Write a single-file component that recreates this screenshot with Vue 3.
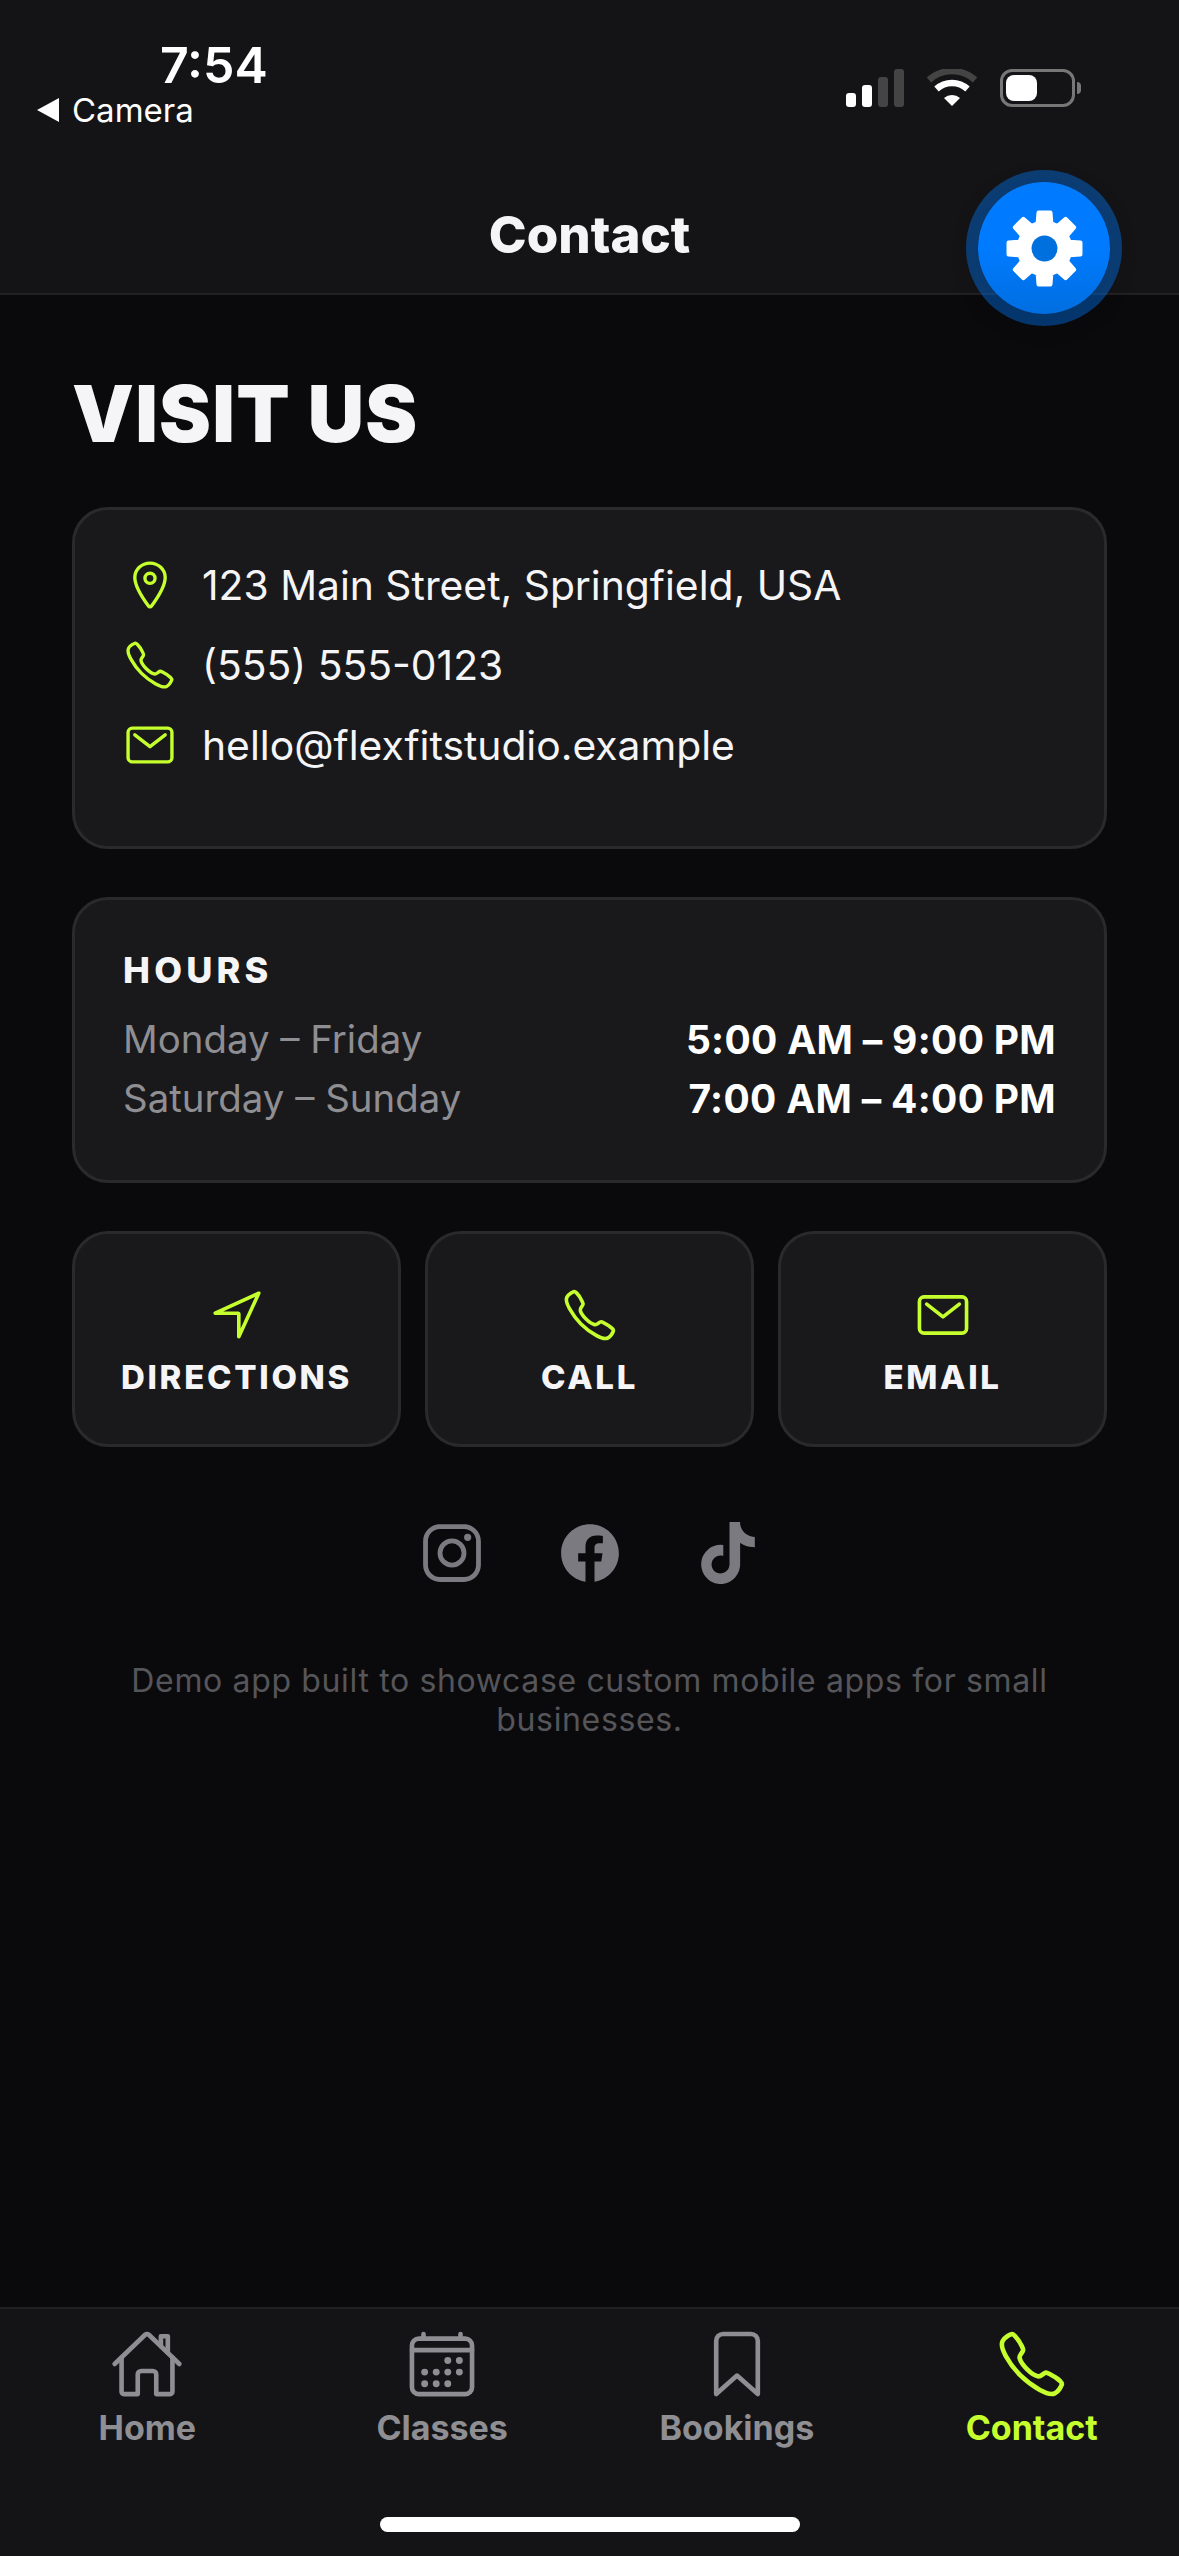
<script setup>
// gear outline, 8 teeth around the centre
function gearPath() {
  const pts = []
  const teeth = 8
  for (let i = 0; i < teeth; i++) {
    const a = (i / teeth) * Math.PI * 2 - Math.PI / 2
    const step = Math.PI / teeth
    const add = (r, d) => pts.push([50 + r * Math.cos(a + d), 50 + r * Math.sin(a + d)])
    add(45, -step * 0.42)
    add(45, step * 0.42)
    add(32, step * 0.68)
    add(32, step * 1.32)
  }
  return 'M' + pts.map((p) => p[0].toFixed(2) + ' ' + p[1].toFixed(2)).join('L') + 'Z'
}
const gear = gearPath()

const phone = 'M451 374c-15.88-16-54.34-39.35-73-48.76-24.3-12.24-26.3-13.24-45.4.95-12.74 9.47-21.21 17.93-36.12 14.75s-47.31-21.11-75.68-49.39-47.34-61.62-50.53-76.48 5.41-23.23 14.79-36c13.22-18 12.22-21 .92-45.3-8.81-18.9-32.84-57-48.9-72.8C119.9 44 119.9 47 108.83 51.6A160.15 160.15 0 0083 65.37C67 76 58.12 84.83 51.91 98.1s-9 44.38 23.07 102.64 54.57 88.05 101.14 134.49S258.5 406.64 310.85 436c64.76 36.27 89.6 29.2 102.91 23s22.18-15 32.83-31a159.09 159.09 0 0013.8-25.8C465 391.17 468 391.17 451 374z'

const hours = [
  { days: 'Monday – Friday', time: '5:00 AM – 9:00 PM' },
  { days: 'Saturday – Sunday', time: '7:00 AM – 4:00 PM' }
]
const calDots = [[296, 232], [376, 232], [136, 312], [216, 312], [296, 312], [376, 312], [136, 392], [216, 392], [296, 392]]
</script>

<template>
  <div class="page">
    <header class="top">
      <div class="status">
        <div class="status-left">
          <div class="time">7:54</div>
          <div class="back"><span class="back-arrow"></span>Camera</div>
        </div>
        <div class="status-right">
          <svg width="60" height="38" viewBox="0 0 60 38">
            <rect x="0" y="24" width="10" height="14" rx="3" fill="#fff" />
            <rect x="16" y="16" width="10" height="22" rx="3" fill="#fff" />
            <rect x="32" y="8" width="10" height="30" rx="3" fill="#444" />
            <rect x="48" y="0" width="10" height="38" rx="3" fill="#444" />
          </svg>
          <svg class="wifi" width="52" height="38" viewBox="0 0 52 38">
            <path d="M3 11 A34 34 0 0 1 49 11" fill="none" stroke="#444" stroke-width="6.5" />
            <path d="M10.500 20 A23 23 0 0 1 41.500 20" fill="none" stroke="#fff" stroke-width="6.5" />
            <path d="M18 29 L26 37 L34 29 A12 12 0 0 0 18 29Z" fill="#fff" />
          </svg>
          <div class="battery"><span class="battery-fill"></span></div>
          <span class="battery-cap"></span>
        </div>
      </div>
      <h1 class="title">Contact</h1>
    </header>

    <button class="gear-btn">
      <svg width="81" height="81" viewBox="0 0 100 100">
        <path :d="gear" fill="#fff" stroke="#fff" stroke-width="5" stroke-linejoin="round" />
        <circle cx="50" cy="50" r="16" fill="#0070de" />
      </svg>
    </button>

    <main class="content">
      <h2 class="heading">VISIT US</h2>

      <section class="card info">
        <div class="info-row">
          <svg class="ico" viewBox="0 0 512 512">
            <path d="M256 48c-79.500 0-144 61.390-144 137 0 87 96 224.870 131.250 272.490a15.770 15.770 0 0025.500 0C304 409.890 400 272.070 400 185c0-75.610-64.500-137-144-137z" />
            <circle cx="256" cy="192" r="48" />
          </svg>
          <span>123 Main Street, Springfield, USA</span>
        </div>
        <div class="info-row">
          <svg class="ico" viewBox="0 0 512 512"><path :d="phone" /></svg>
          <span>(555) 555-0123</span>
        </div>
        <div class="info-row">
          <svg class="ico" viewBox="0 0 512 512">
            <rect x="48" y="96" width="416" height="320" rx="40" ry="40" />
            <path d="M112 160l144 112 144-112" />
          </svg>
          <span>hello@flexfitstudio.example</span>
        </div>
      </section>

      <section class="card hours">
        <h3 class="hours-title">HOURS</h3>
        <div v-for="h in hours" :key="h.days" class="hours-row">
          <span class="days">{{ h.days }}</span>
          <span class="range">{{ h.time }}</span>
        </div>
      </section>

      <div class="actions">
        <div class="action">
          <svg class="ico" viewBox="0 0 512 512"><path d="M448 64L64 240.140h200a8 8 0 018 8V448z" /></svg>
          <span>DIRECTIONS</span>
        </div>
        <div class="action">
          <svg class="ico" viewBox="0 0 512 512"><path :d="phone" /></svg>
          <span>CALL</span>
        </div>
        <div class="action">
          <svg class="ico" viewBox="0 0 512 512">
            <rect x="48" y="96" width="416" height="320" rx="40" ry="40" />
            <path d="M112 160l144 112 144-112" />
          </svg>
          <span>EMAIL</span>
        </div>
      </div>

      <div class="socials">
        <svg class="social" viewBox="0 0 512 512">
          <path d="M349.330 69.330a93.620 93.620 0 0193.340 93.340v186.660a93.620 93.620 0 01-93.340 93.340H162.670a93.620 93.620 0 01-93.340-93.340V162.670a93.620 93.620 0 0193.340-93.340h186.660m0-37.330H162.670C90.800 32 32 90.800 32 162.670v186.660C32 421.200 90.800 480 162.670 480h186.660C421.200 480 480 421.200 480 349.330V162.670C480 90.800 421.200 32 349.330 32z" />
          <path d="M377.330 162.670a28 28 0 1128-28 27.940 27.940 0 01-28 28zM256 181.330A74.670 74.670 0 11181.330 256 74.750 74.750 0 01256 181.330m0-37.330a112 112 0 10112 112 112 112 0 00-112-112z" />
        </svg>
        <svg class="social" viewBox="0 0 512 512">
          <path fill-rule="evenodd" d="M480 257.350c0-123.700-100.300-224-224-224s-224 100.300-224 224c0 111.800 81.900 204.470 189 221.290V322.120h-56.890v-64.770H221V208c0-56.130 33.450-87.160 84.610-87.160 24.510 0 50.150 4.380 50.150 4.380v55.130H327.500c-27.810 0-36.510 17.260-36.510 35v42h62.120l-9.920 64.770H291v156.540c107.100-16.810 189-109.480 189-221.310z" />
        </svg>
        <svg class="social" viewBox="0 0 512 512">
          <path d="M412.190 118.660a109.270 109.270 0 01-9.450-5.500 132.870 132.870 0 01-24.270-20.620c-18.100-20.710-24.860-41.720-27.350-56.430h.1C349.140 23.900 350 16 350.130 16h-82.440v318.780c0 4.280 0 8.510-.18 12.690 0 .52-.05 1-.08 1.560 0 .23 0 .47-.05.71v.18a70 70 0 01-35.220 55.560 68.800 68.800 0 01-34.110 9c-38.410 0-69.540-31.320-69.540-70s31.130-70 69.540-70a68.900 68.900 0 0121.410 3.390l.1-83.940a153.140 153.140 0 00-118 34.520 161.790 161.790 0 00-35.300 43.530c-3.480 6-16.610 30.110-18.200 69.240-1 22.210 5.670 45.220 8.850 54.730v.2c2 5.600 9.750 24.710 22.380 40.820A167.530 167.530 0 00115 470.660v-.2l.2.200c39.910 27.120 84.160 25.340 84.160 25.340 7.660-.31 33.320 0 62.460-13.810 32.320-15.310 50.720-38.120 50.720-38.120a158.460 158.460 0 0027.640-45.930c7.460-19.610 9.950-43.130 9.950-52.530V176.490c1 .6 14.320 9.410 14.320 9.410s19.190 12.300 49.130 20.310c21.480 5.700 50.420 6.900 50.420 6.900v-81.840c-10.140 1.100-30.730-2.100-51.810-12.610z" />
        </svg>
      </div>

      <p class="note">Demo app built to showcase custom mobile apps for small businesses.</p>
    </main>

    <nav class="tabs">
      <div class="tab">
        <svg class="tab-ico" viewBox="0 0 512 512">
          <path d="M80 212v236a16 16 0 0016 16h96V328a24 24 0 0124-24h80a24 24 0 0124 24v136h96a16 16 0 0016-16V212" />
          <path d="M480 256L266.890 52c-5-5.280-16.690-5.340-22 0L32 256" />
          <path d="M400 179V64h-48v69" />
        </svg>
        <span>Home</span>
      </div>
      <div class="tab">
        <svg class="tab-ico" viewBox="0 0 512 512">
          <rect x="48" y="80" width="416" height="384" rx="48" />
          <circle v-for="d in calDots" :key="d.join()" :cx="d[0]" :cy="d[1]" r="24" class="dot" />
          <path d="M128 48v32M384 48v32M464 160H48" />
        </svg>
        <span>Classes</span>
      </div>
      <div class="tab">
        <svg class="tab-ico" viewBox="0 0 512 512">
          <path d="M352 48H160a48 48 0 00-48 48v368l144-128 144 128V96a48 48 0 00-48-48z" />
        </svg>
        <span>Bookings</span>
      </div>
      <div class="tab active">
        <svg class="tab-ico" viewBox="0 0 512 512"><path :d="phone" /></svg>
        <span>Contact</span>
      </div>
    </nav>
    <div class="home-bar"><span class="indicator"></span></div>
  </div>
</template>

<style>
html,
body {
  margin: 0;
  background: #0a0a0c;
}
</style>

<style scoped>
.page {
  position: relative;
  width: 1179px;
  height: 2556px;
  display: flex;
  flex-direction: column;
  background: #0a0a0c;
  font-family: Inter, 'Liberation Sans', sans-serif;
  color: #f5f5f7;
  overflow: hidden;
}
.top {
  height: 295px;
  box-sizing: border-box;
  background: #141416;
  border-bottom: 2px solid #212124;
}
.status {
  height: 158px;
  display: flex;
  justify-content: space-between;
  box-sizing: border-box;
}
.status-left {
  padding: 36px 0 0 37px;
}
.time {
  margin-left: 123px;
  font-size: 50px;
  line-height: 58px;
  font-weight: 600;
  color: #fff;
}
.back {
  display: flex;
  align-items: center;
  font-size: 33px;
  line-height: 40px;
  margin-top: -4px;
  color: #fff;
}
.back-arrow {
  width: 0;
  height: 0;
  border-top: 12px solid transparent;
  border-bottom: 12px solid transparent;
  border-right: 22px solid #fff;
  margin-right: 13px;
}
.status-right {
  display: flex;
  align-items: flex-start;
  padding: 69px 20px 0 0;
  margin-right: 82px;
}
.wifi {
  margin-left: 20px;
}
.battery {
  margin-left: 22px;
  width: 75px;
  height: 38px;
  box-sizing: border-box;
  border: 3px solid #777;
  border-radius: 12px;
  padding: 3px;
}
.battery-fill {
  display: block;
  width: 31px;
  height: 26px;
  background: #fff;
  border-radius: 8px;
}
.battery-cap {
  width: 4px;
  height: 12px;
  margin: 13px -4px 0 2px;
  background: #777;
  border-radius: 0 6px 6px 0;
}
.title {
  margin: 0;
  text-align: center;
  font-size: 51px;
  line-height: 60px;
  font-weight: 800;
  padding-top: 47px;
  color: #f5f5f7;
}
.gear-btn {
  position: absolute;
  left: 978px;
  top: 182px;
  width: 132px;
  height: 132px;
  padding: 0;
  border: 0;
  border-radius: 50%;
  display: flex;
  align-items: center;
  justify-content: center;
  background: linear-gradient(180deg, #007bff 50%, #006ee0 100%);
  box-shadow: 0 0 0 12px rgba(0, 122, 255, 0.4), 0 6px 24px rgba(0, 0, 0, 0.35);
}
.content {
  flex: 1;
  padding: 0 72px;
}
.heading {
  margin: 0;
  padding-top: 73px;
  font-size: 78px;
  line-height: 92px;
  font-weight: 900;
  letter-spacing: 1.200px;
  color: #f5f5f7;
}
.card {
  box-sizing: border-box;
  background: #19191b;
  border: 3px solid #2a2a2d;
  border-radius: 36px;
  padding: 48px;
}
.info {
  margin-top: 47px;
  height: 342px;
  padding-top: 47px;
  display: flex;
  flex-direction: column;
  gap: 24px;
}
.info-row {
  display: flex;
  align-items: center;
  gap: 25px;
  font-size: 40.800px;
  line-height: 56px;
  color: #f5f5f7;
}
.ico {
  width: 54px;
  height: 54px;
  flex: none;
  fill: none;
  stroke: #c6ff2e;
  stroke-width: 32;
  stroke-linecap: round;
  stroke-linejoin: round;
}
.hours {
  margin-top: 48px;
  height: 286px;
}
.hours-title {
  margin: 0 0 18px;
  font-size: 36px;
  line-height: 44px;
  font-weight: 800;
  letter-spacing: 4.200px;
  color: #f5f5f7;
}
.hours-row {
  display: flex;
  justify-content: space-between;
  align-items: center;
  font-size: 38.400px;
  line-height: 59px;
}
.days {
  color: #8e8e93;
}
.range {
  font-size: 39px;
  font-weight: 700;
  letter-spacing: 0.300px;
  color: #fff;
}
.actions {
  margin-top: 48px;
  display: grid;
  grid-template-columns: repeat(3, 1fr);
  gap: 24px;
}
.action {
  box-sizing: border-box;
  height: 216px;
  background: #19191b;
  border: 3px solid #2a2a2d;
  border-radius: 36px;
  padding-top: 52px;
  display: flex;
  flex-direction: column;
  align-items: center;
  gap: 11px;
  font-size: 33px;
  line-height: 44px;
  font-weight: 800;
  letter-spacing: 2.700px;
  color: #f5f5f7;
}
.action .ico {
  width: 58px;
  height: 58px;
}
.socials {
  margin-top: 73px;
  display: flex;
  justify-content: center;
  gap: 72px;
}
.social {
  width: 66px;
  height: 66px;
  fill: #7a7a80;
}
.note {
  margin: 75px 0 0;
  padding: 0 48px;
  text-align: center;
  font-size: 32px;
  line-height: 39px;
  letter-spacing: 0.650px;
  color: #55555a;
}
.tabs {
  box-sizing: border-box;
  height: 164px;
  padding-top: 18px;
  display: grid;
  grid-template-columns: repeat(4, 1fr);
  background: #141416;
  border-top: 2px solid #212124;
}
.tab {
  display: flex;
  flex-direction: column;
  align-items: center;
  gap: 7px;
  font-size: 34px;
  line-height: 40px;
  font-weight: 700;
  color: #8e8e93;
}
.tab-ico {
  width: 74px;
  height: 74px;
  fill: none;
  stroke: currentColor;
  stroke-width: 32;
  stroke-linecap: round;
  stroke-linejoin: round;
}
.tab-ico .dot {
  fill: currentColor;
  stroke: none;
}
.active {
  color: #c6ff2e;
}
.home-bar {
  height: 85px;
  box-sizing: border-box;
  background: #141416;
  display: flex;
  justify-content: center;
  padding-top: 46px;
}
.indicator {
  width: 420px;
  height: 15px;
  border-radius: 8px;
  background: #fff;
}
</style>
